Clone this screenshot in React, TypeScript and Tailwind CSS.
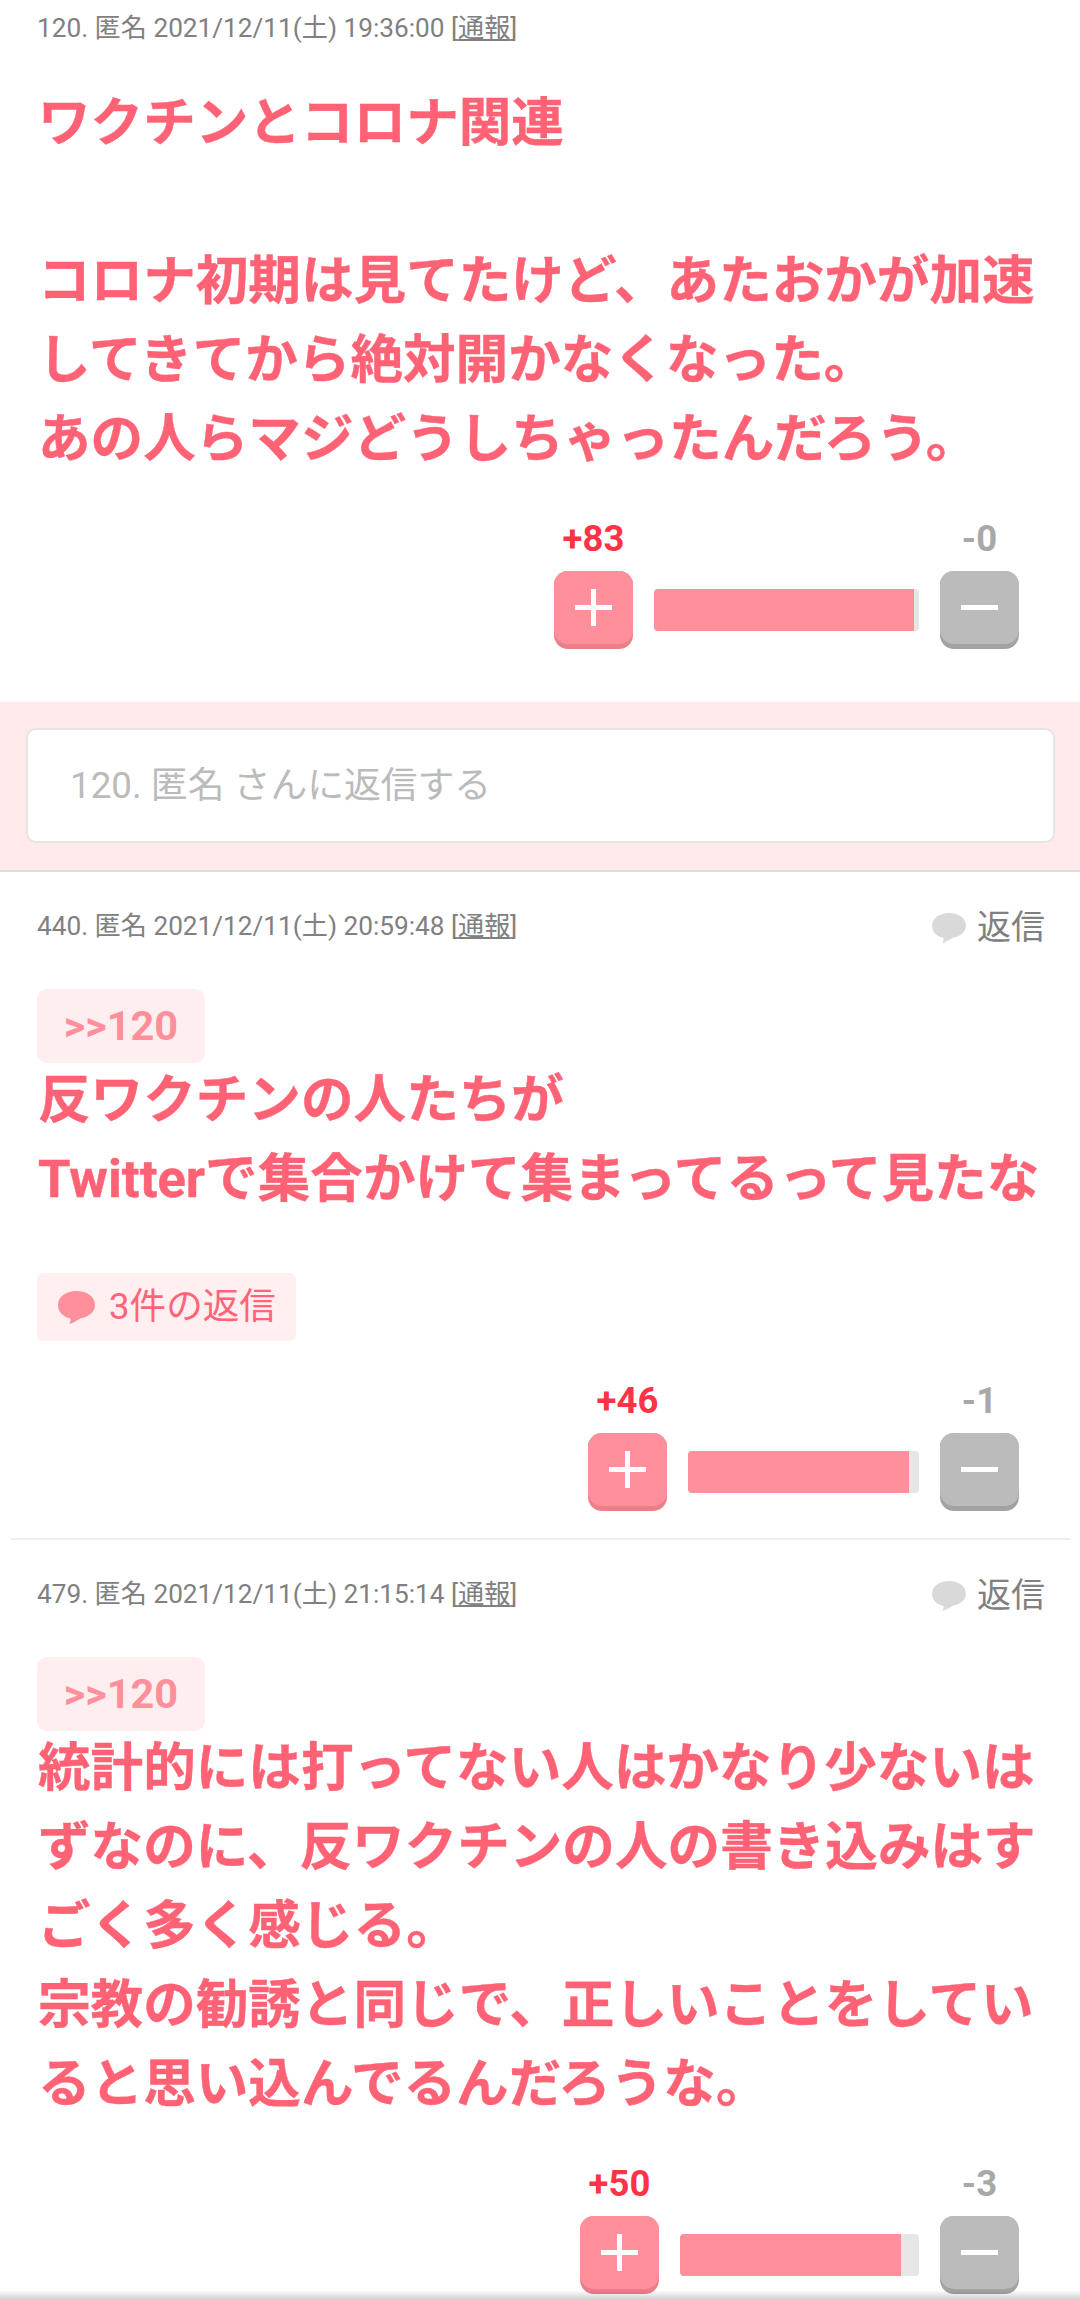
function Bubble(props: { color: string; className: string }) {
  return (
    <svg viewBox="0 0 36 32" className={props.className}>
      <path
        d="M18 0C28 0 36 5.500 36 13.500C36 21 29 25 22 26.500C18 29 15 31 11 32C12 30 12.500 28.500 12 26.500C5 25 0 20.500 0 13.500C0 5.500 8 0 18 0Z"
        fill={props.color}
      />
    </svg>
  );
}

function VoteButton(props: { label: string; plus?: boolean }) {
  return (
    <div className="w-[79px] flex flex-col items-center">
      <div
        className={`h-[41px] leading-[41px] text-[36.500px] font-bold ${props.plus ? "text-[#ff3347]" : "text-[#a8a8a8]"}`}
      >
        {props.label}
      </div>
      <div
        className={`mt-[12px] h-[78px] w-full rounded-[14px] ${props.plus ? "bg-[#ec7e8a]" : "bg-[#a2a2a2]"}`}
      >
        <div
          className={`h-[73px] rounded-[14px] flex items-center justify-center ${props.plus ? "bg-[#ff8f9b]" : "bg-[#bbbbbb]"}`}
        >
          <svg width="37" height="37" viewBox="0 0 37 37">
            <rect x="0" y="16" width="37" height="5" fill="#fff" />
            {props.plus && <rect x="16" y="0" width="5" height="37" fill="#fff" />}
          </svg>
        </div>
      </div>
    </div>
  );
}

function Votes(props: { plus: string; minus: string; barClass: string; fillClass: string }) {
  return (
    <div className="flex justify-end pr-[61px]">
      <VoteButton label={props.plus} plus />
      <div className={`mx-[21px] mt-[71px] h-[42px] rounded-[4px] overflow-hidden bg-[#e6e6e6] ${props.barClass}`}>
        <div className={`h-full bg-[#ff8f9b] ${props.fillClass}`} />
      </div>
      <VoteButton label={props.minus} />
    </div>
  );
}

function Meta(props: { text: string; reply?: boolean }) {
  return (
    <div className="flex items-center justify-between pl-[37px] pr-[35px] h-[56px]">
      <div className="text-[26.200px] text-[#808080] whitespace-nowrap">
        {props.text} [<span className="underline">通報</span>]
      </div>
      {props.reply && (
        <div className="flex items-center gap-[11px] text-[34px] text-[#808080]">
          <Bubble color="#d9d9d9" className="w-[34px] h-[30px] mt-[2px]" />
          返信
        </div>
      )}
    </div>
  );
}

function Anchor() {
  return (
    <div className="ml-[37px] w-[168px] h-[74px] rounded-[10px] bg-[#ffeef0] flex items-center justify-center text-[41.500px] font-bold text-[#ff8f9b]">
      &gt;&gt;120
    </div>
  );
}

function Body(props: { lines: string[] }) {
  return (
    <div className="pl-[38px] text-[52.600px] leading-[79px] font-bold text-[#ff6275] whitespace-nowrap [-webkit-text-stroke:0.4px_#ff6275]">
      {props.lines.map((line, i) => (
        <div key={i} className="h-[79px]">
          {line}
        </div>
      ))}
    </div>
  );
}

export default function App() {
  return (
    <div className="relative h-[2300px] w-[1080px] overflow-hidden bg-white font-['Roboto','Noto_Sans_CJK_JP',sans-serif]">
      <div className="pt-[1px]">
        <Meta text="120. 匿名 2021/12/11(土) 19:36:00" />
      </div>
      <div className="mt-[27px]">
        <Body
          lines={[
            "ワクチンとコロナ関連",
            "",
            "コロナ初期は見てたけど、あたおかが加速",
            "してきてから絶対開かなくなった。",
            "あの人らマジどうしちゃったんだろう。",
          ]}
        />
      </div>
      <div className="mt-[39px]">
        <Votes plus="+83" minus="-0" barClass="w-[265px]" fillClass="w-[260px]" />
      </div>
      <div className="mt-[53px] h-[170px] bg-[#ffe9eb] border-b-[2px] border-[#dddddd] pl-[26px] pr-[25px] pt-[26px]">
        <div className="h-[115px] rounded-[10px] border-[2px] border-[#e5e5e5] bg-white flex items-center pl-[42px] text-[36.800px] text-[#bbbbbb]">
          120. 匿名 さんに返信する
        </div>
      </div>
      <div className="mt-[27px]">
        <Meta text="440. 匿名 2021/12/11(土) 20:59:48" reply />
      </div>
      <div className="mt-[34px]">
        <Anchor />
      </div>
      <div className="-mt-[2px]">
        <Body lines={["反ワクチンの人たちが", "Twitterで集合かけて集まってるって見たな"]} />
      </div>
      <div className="ml-[37px] mt-[54px] w-[259px] h-[68px] rounded-[6px] bg-[#ffeff0] flex items-center pl-[21px] gap-[14px] text-[36.600px] text-[#ff6478]">
        <Bubble color="#ff8f9b" className="w-[37px] h-[33px]" />
        3件の返信
      </div>
      <div className="mt-[39px]">
        <Votes plus="+46" minus="-1" barClass="w-[231px]" fillClass="w-[221px]" />
      </div>
      <div className="ml-[11px] mr-[9px] mt-[27px] h-[2px] bg-[#eeeeee]" />
      <div className="mt-[27px]">
        <Meta text="479. 匿名 2021/12/11(土) 21:15:14" reply />
      </div>
      <div className="mt-[34px]">
        <Anchor />
      </div>
      <div className="-mt-[2px]">
        <Body
          lines={[
            "統計的には打ってない人はかなり少ないは",
            "ずなのに、反ワクチンの人の書き込みはす",
            "ごく多く感じる。",
            "宗教の勧誘と同じで、正しいことをしてい",
            "ると思い込んでるんだろうな。",
          ]}
        />
      </div>
      <div className="mt-[39px]">
        <Votes plus="+50" minus="-3" barClass="w-[239px]" fillClass="w-[221px]" />
      </div>
      <div className="absolute bottom-0 left-0 h-[10px] w-full bg-gradient-to-b from-[#00000000] to-[#00000030]" />
    </div>
  );
}
